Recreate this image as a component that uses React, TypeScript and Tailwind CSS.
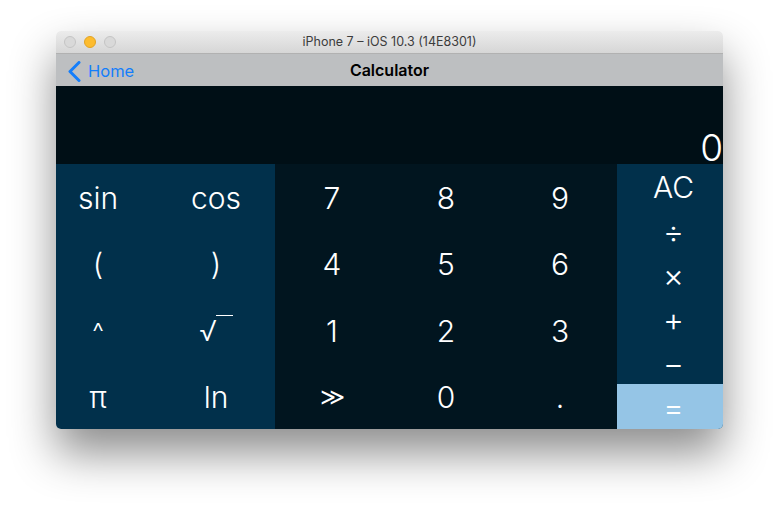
import React from 'react';

const font = "font-['Inter','Liberation_Sans',sans-serif]";

const sciKeys = ['sin', 'cos', '(', ')', '^', 'sqrt', 'π', 'ln'];
const digitKeys = ['7', '8', '9', '4', '5', '6', '1', '2', '3', '≫', '0', '.'];
const opKeys = ['÷', '×', '+', '−'];

const SqrtLabel = () => (
  <span className="flex items-start">
    <span className="text-[28px] font-light">√</span>
    <span className="-ml-[1px] mt-[5px] w-[17px] border-t-[1.5px] border-white" />
  </span>
);

const App = () => {
  return (
    <div className={`min-h-[509px] w-[779px] bg-white pl-[56px] pt-[31px] ${font}`}>
      <div className="w-[667px] overflow-hidden rounded-[5px] shadow-[0_24px_45px_rgba(0,0,0,0.45)]">
        {/* Title bar */}
        <div className="relative flex h-[23px] items-center justify-center border-b border-[#b1b1b1] bg-gradient-to-b from-[#ececec] to-[#d6d6d6]">
          <div className="absolute left-[8px] top-[5px] flex gap-[8px]">
            <span className="h-[12px] w-[12px] rounded-full border border-[#c4c4c4] bg-[#d9d9d9]" />
            <span className="h-[12px] w-[12px] rounded-full border border-[#e1a325] bg-[#fdbc2f]" />
            <span className="h-[12px] w-[12px] rounded-full border border-[#c4c4c4] bg-[#d9d9d9]" />
          </div>
          <span className="text-[12.5px] text-[#3c3c3c]">iPhone 7 – iOS 10.3 (14E8301)</span>
        </div>

        {/* Nav bar */}
        <div className="relative flex h-[32px] items-center justify-center bg-[#bdbfc1]">
          <div className="absolute left-[12px] top-[5px] flex items-center gap-[7px] text-[#147efb]">
            <svg width="13" height="21" viewBox="0 0 13 21" fill="none">
              <path d="M11 1.5 L2 10.5 L11 19.5" stroke="#147efb" strokeWidth="3" strokeLinecap="round" strokeLinejoin="round" />
            </svg>
            <span className="text-[16.5px]">Home</span>
          </div>
          <span className="text-[16px] font-semibold text-black">Calculator</span>
        </div>

        {/* Display */}
        <div className="flex h-[78px] items-end justify-end bg-[#000f16] pr-0">
          <span className="text-[37px] font-light leading-[32px] text-white">0</span>
        </div>

        {/* Keypad */}
        <div className="flex h-[265px] font-light text-white">
          <div className="grid w-[219px] grid-cols-[84px_1fr] grid-rows-4 bg-[#01304b] text-[30px]">
            {sciKeys.map((k, i) => (
              <div
                key={k}
                className={`flex items-center justify-center pt-[3px] ${i % 2 === 1 ? 'pl-[17px]' : ''}`}
              >
                {k === 'sqrt' ? <SqrtLabel /> : k === '^' ? <span className="text-[26px]">^</span> : k}
              </div>
            ))}
          </div>

          <div className="grid w-[342px] grid-cols-3 grid-rows-4 bg-[#01151f] text-[30px]">
            {digitKeys.map((k) => (
              <div key={k} className="flex items-center justify-center pt-[3px]">
                {k === '≫' ? <span className="text-[24px]">≫</span> : k}
              </div>
            ))}
          </div>

          <div className="flex flex-1 flex-col bg-[#01304b] pl-[7px] text-[32px] font-light leading-none">
            <div className="flex h-[44px] items-center justify-center pt-[1px] text-[30px]">AC</div>
            {opKeys.map((k) => (
              <div key={k} className="flex h-[44px] items-center justify-center pt-[4px]">
                {k}
              </div>
            ))}
            <div className="-ml-[7px] flex flex-1 items-center justify-center bg-[#95c5e6] pl-[7px] pt-[2px]">=</div>
          </div>
        </div>
      </div>
    </div>
  );
};

export default App;
